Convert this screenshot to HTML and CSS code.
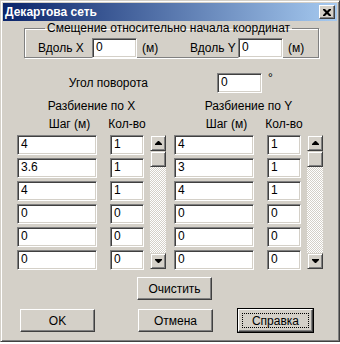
FILE: index.html
```html
<!DOCTYPE html>
<html lang="ru">

<head>
    <meta charset="UTF-8">
    <title>Декартова сеть</title>
    <link rel="stylesheet" href="styles.css">
</head>

<body>
    <div class="window">
        <div class="titlebar">
            <span class="title">Декартова сеть</span>
            <div class="close_btn">
                <svg width="8" height="7" viewBox="0 0 8 7">
                    <path d="M0 0h2l2 2 2-2h2v1l-2.5 2.5L8 6v1H6L4 5 2 7H0V6l2.5-2.5L0 1z" fill="#000"/>
                </svg>
            </div>
        </div>

        <div class="client">
            <fieldset class="offset_box">
                <legend>Смещение относительно начала координат</legend>
                <div class="offset_row">
                    <span class="lbl_x">Вдоль X</span>
                    <div class="field field_small">0</div>
                    <span class="unit_x">(м)</span>
                    <span class="lbl_y">Вдоль Y</span>
                    <div class="field field_small">0</div>
                    <span class="unit_y">(м)</span>
                </div>
            </fieldset>

            <div class="angle_row">
                <span class="angle_lbl">Угол поворота</span>
                <div class="field field_small">0</div>
                <span class="degree">°</span>
            </div>

            <div class="panels">
                <!-- X split -->
                <div class="panel">
                    <div class="panel_title">Разбиение по X</div>
                    <div class="panel_head">
                        <span class="head_step">Шаг (м)</span>
                        <span class="head_count">Кол-во</span>
                    </div>
                    <div class="panel_body">
                        <div class="rows">
                            <div class="field field_step">4</div><div class="field field_count">1</div>
                            <div class="field field_step">3.6</div><div class="field field_count">1</div>
                            <div class="field field_step">4</div><div class="field field_count">1</div>
                            <div class="field field_step">0</div><div class="field field_count">0</div>
                            <div class="field field_step">0</div><div class="field field_count">0</div>
                            <div class="field field_step">0</div><div class="field field_count">0</div>
                        </div>
                        <div class="scrollbar">
                            <div class="sb_btn">
                                <svg width="7" height="4" viewBox="0 0 7 4"><path d="M3 0h1l3 3v1H0V3z" fill="#000"/></svg>
                            </div>
                            <div class="sb_btn sb_thumb"></div>
                            <div class="sb_track"></div>
                            <div class="sb_btn">
                                <svg width="7" height="4" viewBox="0 0 7 4"><path d="M0 0h7v1L4 4H3L0 1z" fill="#000"/></svg>
                            </div>
                        </div>
                    </div>
                </div>

                <!-- Y split -->
                <div class="panel">
                    <div class="panel_title">Разбиение по Y</div>
                    <div class="panel_head">
                        <span class="head_step">Шаг (м)</span>
                        <span class="head_count">Кол-во</span>
                    </div>
                    <div class="panel_body">
                        <div class="rows">
                            <div class="field field_step">4</div><div class="field field_count">1</div>
                            <div class="field field_step">3</div><div class="field field_count">1</div>
                            <div class="field field_step">4</div><div class="field field_count">1</div>
                            <div class="field field_step">0</div><div class="field field_count">0</div>
                            <div class="field field_step">0</div><div class="field field_count">0</div>
                            <div class="field field_step">0</div><div class="field field_count">0</div>
                        </div>
                        <div class="scrollbar">
                            <div class="sb_btn">
                                <svg width="7" height="4" viewBox="0 0 7 4"><path d="M3 0h1l3 3v1H0V3z" fill="#000"/></svg>
                            </div>
                            <div class="sb_btn sb_thumb"></div>
                            <div class="sb_track"></div>
                            <div class="sb_btn">
                                <svg width="7" height="4" viewBox="0 0 7 4"><path d="M0 0h7v1L4 4H3L0 1z" fill="#000"/></svg>
                            </div>
                        </div>
                    </div>
                </div>
            </div>

            <div class="clear_row">
                <div class="btn">Очистить</div>
            </div>

            <div class="actions">
                <div class="btn">OK</div>
                <div class="btn">Отмена</div>
                <div class="btn btn_default"><span class="focus">Справка</span></div>
            </div>
        </div>
    </div>
</body>

</html>
```

FILE: styles.css
```css
* {
    margin: 0;
    padding: 0;
    box-sizing: border-box;
}

body {
    width: 340px;
    height: 344px;
    background-color: #ffffff;
    font-family: "Liberation Sans", Arial, sans-serif;
    font-size: 12px;
    color: #000;
}

.window {
    width: 340px;
    height: 342px;
    padding: 2px;
    background-color: #d4d0c8;
    border: 1px solid;
    border-color: #d4d0c8 #404040 #404040 #d4d0c8;
    box-shadow: inset 1px 1px 0 #fff, inset -1px -1px 0 #808080;
}

.titlebar {
    height: 18px;
    display: flex;
    align-items: center;
    justify-content: space-between;
    padding: 0 2px 0 2px;
    background: linear-gradient(to right, #0a246a, #a6caf0);
}

.title {
    color: #fff;
    font-weight: bold;
    font-size: 12px;
}

.close_btn {
    width: 16px;
    height: 14px;
    display: flex;
    align-items: center;
    justify-content: center;
    background-color: #d4d0c8;
    border: 1px solid;
    border-color: #fff #404040 #404040 #fff;
    box-shadow: inset -1px -1px 0 #808080;
}

/* sunken edit field */
.field {
    height: 20px;
    line-height: 16px;
    padding-left: 3px;
    background-color: #fff;
    border: 1px solid;
    border-color: #808080 #fff #fff #808080;
    box-shadow: inset 1px 1px 0 #404040, inset -1px -1px 0 #d4d0c8;
}

.field_small {
    width: 45px;
}

/* group box */
.offset_box {
    width: 295px;
    height: 36px;
    margin: 1px 0 0 21px;
    border: 1px solid #808080;
    box-shadow: inset 1px 1px 0 #fff, 1px 1px 0 #fff;
    padding: 0 0 0 13px;
}

.offset_box legend {
    margin-left: 7px;
    padding: 0 2px;
    line-height: 13px;
}

.offset_row {
    display: flex;
    align-items: center;
    margin-top: 3px;
}

.lbl_x {
    width: 54px;
}

.unit_x {
    width: 53px;
    padding-left: 5px;
}

.lbl_y {
    width: 48px;
}

.unit_y {
    padding-left: 5px;
}

.angle_row {
    display: flex;
    align-items: center;
    margin-top: 15px;
}

.angle_lbl {
    width: 145px;
    text-align: right;
    margin-right: 69px;
}

.degree {
    align-self: flex-start;
    margin-left: 6px;
    line-height: 10px;
}

.panels {
    display: flex;
    gap: 8px;
    padding-left: 14px;
    margin-top: 4px;
}

.panel {
    width: 149px;
}

.panel_title {
    text-align: center;
    height: 18px;
    line-height: 18px;
    white-space: nowrap;
}

.panel_head {
    display: flex;
    height: 20px;
    line-height: 18px;
    white-space: nowrap;
}

.head_step {
    width: 93px;
    padding-left: 12px;
    text-align: center;
}

.head_count {
    width: 34px;
    display: flex;
    justify-content: center;
}

.panel_body {
    display: flex;
    gap: 6px;
}

.rows {
    display: grid;
    grid-template-columns: 80px 34px;
    column-gap: 13px;
    row-gap: 3px;
}

.scrollbar {
    width: 16px;
    display: flex;
    flex-direction: column;
    height: 134px;
}

.sb_btn {
    width: 16px;
    height: 16px;
    display: flex;
    align-items: center;
    justify-content: center;
    background-color: #d4d0c8;
    border: 1px solid;
    border-color: #d4d0c8 #404040 #404040 #d4d0c8;
    box-shadow: inset 1px 1px 0 #fff, inset -1px -1px 0 #808080;
}

.sb_track {
    flex: 1;
    background: repeating-conic-gradient(#fff 0 25%, #d4d0c8 0 50%) 0 0 / 2px 2px;
}

/* push buttons */
.btn {
    width: 75px;
    height: 23px;
    display: flex;
    align-items: center;
    justify-content: center;
    background-color: #d4d0c8;
    border: 1px solid;
    border-color: #fff #404040 #404040 #fff;
    box-shadow: inset -1px -1px 0 #808080;
}

.clear_row {
    display: flex;
    padding-left: 134px;
    margin-top: 7px;
}

.actions {
    display: flex;
    padding-left: 17px;
    margin-top: 9px;
}

.actions .btn:nth-child(2) {
    margin-left: 43px;
}

.actions .btn:nth-child(3) {
    margin-left: 25px;
}

.btn_default {
    outline: 1px solid #000;
}

.focus {
    width: 67px;
    height: 15px;
    display: flex;
    align-items: center;
    justify-content: center;
    border: 1px dotted #000;
}
```
